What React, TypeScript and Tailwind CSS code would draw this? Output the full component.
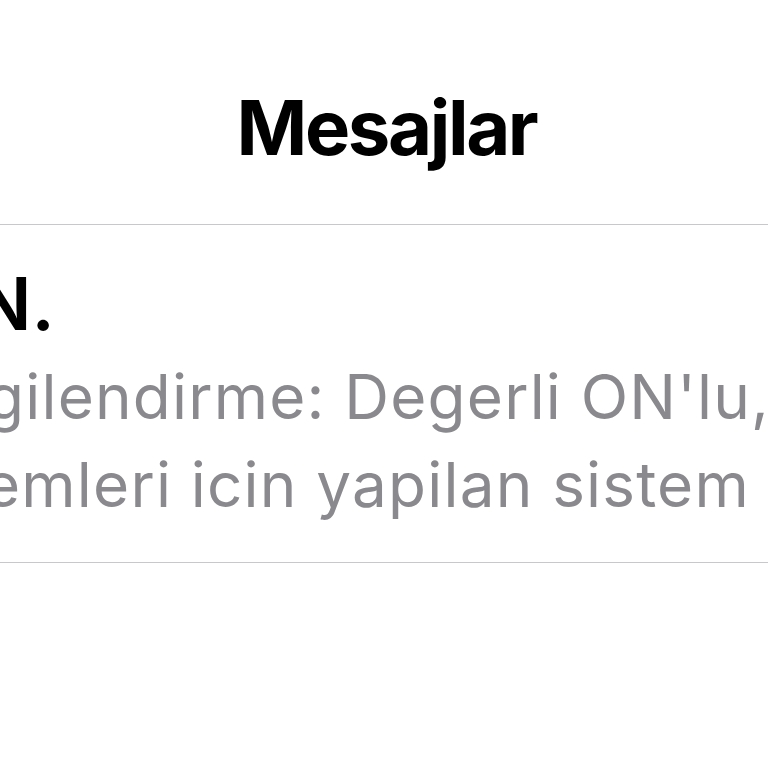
export default function App() {
  return (
    <div className="w-[768px] h-[768px] bg-white overflow-hidden font-['Inter','Liberation_Sans',sans-serif]">
      <div className="pt-[89px] mb-[59px] flex justify-center pl-[5px]">
        <h1 className="text-[76px] leading-[76px] font-bold text-black tracking-[-2.4px]">Mesajlar</h1>
      </div>
      <div className="border-t border-[#c8c7cc]" />
      <div className="pt-[42px] pb-[33px] border-b border-[#c8c7cc] overflow-hidden">
        <div className="text-[73px] leading-[73px] font-semibold text-black whitespace-nowrap ml-[-24px]">N.</div>
        <div className="mt-[13px] text-[62px] leading-[88px] text-[#8a8a8e] whitespace-nowrap tracking-[1.2px]">
          <div className="ml-[-14px]">gilendirme: Degerli ON'lu, bilgi</div>
          <div className="ml-[-16px]">emleri icin yapilan sistem bak</div>
        </div>
      </div>
    </div>
  );
}
